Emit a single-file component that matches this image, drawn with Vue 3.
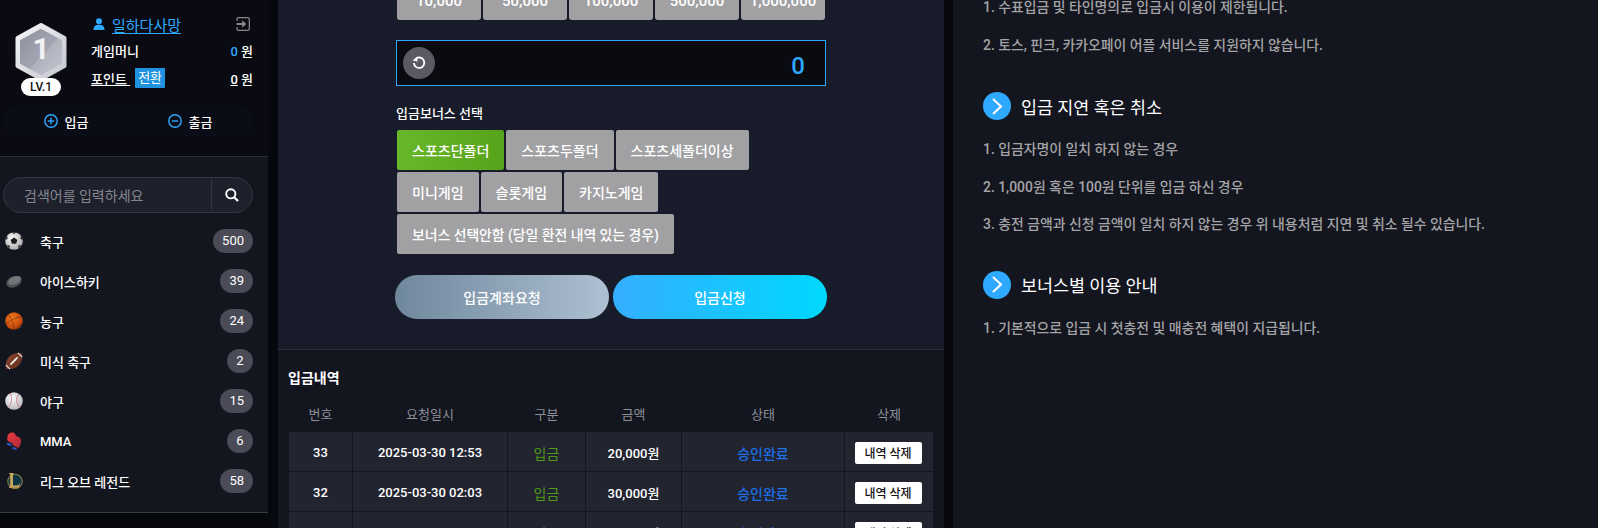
<template>
  <div class="page">
    <aside class="side">
      <section class="profile">
        <div class="profile__top">
          <div class="level">
            <svg class="level__hex" viewBox="0 0 54 58" width="54" height="58">
              <defs>
                <linearGradient id="hexOuter" x1="0" y1="0" x2="1" y2="1">
                  <stop offset="0" stop-color="#f6f6f8" />
                  <stop offset="1" stop-color="#c4c6ce" />
                </linearGradient>
                <linearGradient id="hexInner" x1="0" y1="0" x2="1" y2="1">
                  <stop offset="0" stop-color="#8f919f" />
                  <stop offset="0.55" stop-color="#a3a5b2" />
                  <stop offset="0.56" stop-color="#b0b2be" />
                  <stop offset="1" stop-color="#c3c4cf" />
                </linearGradient>
              </defs>
              <path d="M27 2 L50.5 15 V43 L27 56 L3.5 43 V15 Z" fill="url(#hexOuter)" stroke="url(#hexOuter)" stroke-width="4" stroke-linejoin="round" />
              <path d="M27 7 L47 18 V40 L27 51 L7 40 V18 Z" fill="url(#hexInner)" stroke="url(#hexInner)" stroke-width="2" stroke-linejoin="round" />
            </svg>
            <span class="level__num">1</span>
            <span class="level__pill">LV.1</span>
          </div>
          <div class="info">
            <div class="info__name">
              <svg viewBox="0 0 12 12" width="12" height="12">
                <circle cx="6" cy="3.2" r="3" fill="#2fa8ff" />
                <path d="M0.5 12 C0.5 8 3 6.8 6 6.8 C9 6.8 11.5 8 11.5 12 Z" fill="#2fa8ff" />
              </svg>
              <a class="info__link">일하다사망</a>
              <svg class="info__logout" viewBox="0 0 14 14" width="14" height="14" fill="none">
                <path d="M1 4 V2 Q1 0.7 2.3 0.7 H11.7 Q13.3 0.7 13.3 2.3 V11.7 Q13.3 13.3 11.7 13.3 H2.3 Q1 13.3 1 12 V10" stroke="#8a8a8a" stroke-width="1.2" />
                <path d="M0.5 7 H8.5" stroke="#8a8a8a" stroke-width="2" />
                <path d="M6.2 3.2 L10.4 7 L6.2 10.8 Z" fill="#8a8a8a" />
              </svg>
            </div>
            <div class="info__row">
              <span class="info__label">게임머니</span>
              <span class="info__value"><b>0</b> 원</span>
            </div>
            <div class="info__row">
              <span class="info__label info__label--point"><u>포인트&nbsp;</u><em>전환</em></span>
              <span class="info__value"><u>0</u> 원</span>
            </div>
          </div>
        </div>
        <div class="actions">
          <span class="actions__item">
            <svg viewBox="0 0 14 14" width="14" height="14" fill="none" stroke="#2fa8ff" stroke-width="1.4">
              <circle cx="7" cy="7" r="6.2" /><path d="M3.8 7 H10.2 M7 3.8 V10.2" />
            </svg>
            입금
          </span>
          <span class="actions__item">
            <svg viewBox="0 0 14 14" width="14" height="14" fill="none" stroke="#2fa8ff" stroke-width="1.4">
              <circle cx="7" cy="7" r="6.2" /><path d="M3.8 7 H10.2" />
            </svg>
            출금
          </span>
        </div>
      </section>

      <section class="nav">
        <div class="search">
          <span class="search__text">검색어를 입력하세요</span>
          <span class="search__btn">
            <svg viewBox="0 0 14 14" width="14" height="14" fill="none" stroke="#fff">
              <circle cx="5.8" cy="5.8" r="4.6" stroke-width="1.9" /><path d="M9.2 9.2 L13 13" stroke-width="2.2" />
            </svg>
          </span>
        </div>
        <ul class="sports">
          <li v-for="s in sports" :key="s.name" class="sports__row">
            <svg class="sports__icon" viewBox="0 0 18 18" width="18" height="18">
              <defs>
                <radialGradient id="soccerFill" cx="0.4" cy="0.35" r="0.7">
                  <stop offset="0" stop-color="#fafafa" /><stop offset="1" stop-color="#a8a8a8" />
                </radialGradient>
                <radialGradient id="basketFill" cx="0.4" cy="0.35" r="0.75">
                  <stop offset="0" stop-color="#f07a1c" /><stop offset="0.7" stop-color="#c84a0c" /><stop offset="1" stop-color="#6e3208" />
                </radialGradient>
                <linearGradient id="footballFill" x1="0" y1="0" x2="1" y2="1">
                  <stop offset="0" stop-color="#8e4a30" /><stop offset="1" stop-color="#5f2c1c" />
                </linearGradient>
                <radialGradient id="baseballFill" cx="0.4" cy="0.35" r="0.75">
                  <stop offset="0" stop-color="#fdfdfd" /><stop offset="1" stop-color="#b0b0b6" />
                </radialGradient>
                <linearGradient id="gloveFill" x1="0" y1="0" x2="1" y2="1">
                  <stop offset="0" stop-color="#ec3a40" /><stop offset="1" stop-color="#a92a36" />
                </linearGradient>
              </defs>
              <template v-if="s.icon === 'soccer'">
                <circle cx="9" cy="9" r="8.8" fill="url(#soccerFill)" />
                <path d="M9 5.6 L12.4 8 L11.1 11.8 H6.9 L5.6 8 Z" fill="#1c1c1c" />
                <path d="M6.6 0.6 L9 2 L11.4 0.6 Q9 -0.2 6.6 0.6 Z M0.3 8.6 L2.6 6.6 L2 3.2 Q0.2 5.6 0.3 8.6 Z M17.7 8.6 L15.4 6.6 L16 3.2 Q17.8 5.6 17.7 8.6 Z M4.2 16.4 L5 13.8 L2 13 Q2.8 15.2 4.2 16.4 Z M13.8 16.4 L13 13.8 L16 13 Q15.2 15.2 13.8 16.4 Z" fill="#262626" />
              </template>
              <template v-else-if="s.icon === 'puck'">
                <ellipse cx="9" cy="9.8" rx="8" ry="5.4" fill="#4f5254" transform="rotate(-24 9 9.8)" />
                <ellipse cx="9.6" cy="8.4" rx="6.8" ry="3.8" fill="#737678" transform="rotate(-24 9.6 8.4)" />
              </template>
              <template v-else-if="s.icon === 'basket'">
                <circle cx="9" cy="9" r="8.8" fill="url(#basketFill)" />
                <path d="M1.4 12 Q9 5 16.4 5 M3.4 2.4 Q9 9 9.4 17.6 M11.6 17.2 Q14.6 12.6 17.4 11.4" stroke="#6a2a08" stroke-width="0.6" fill="none" />
              </template>
              <template v-else-if="s.icon === 'football'">
                <path d="M1.2 16.8 Q-0.6 9.6 4.4 4.6 Q9.4 -0.2 16.8 1.2 Q18.6 8.4 13.6 13.4 Q8.6 18.2 1.2 16.8 Z" fill="url(#footballFill)" />
                <path d="M0.9 13 L5 17.1 M13 0.9 L17.1 5" stroke="#e9dfd8" stroke-width="1.1" />
                <path d="M5.4 12.6 L12.6 5.4" stroke="#f2ece6" stroke-width="1.6" />
                <path d="M7.2 9.2 L8.8 10.8 M9.2 7.2 L10.8 8.8" stroke="#f2ece6" stroke-width="0.8" />
              </template>
              <template v-else-if="s.icon === 'baseball'">
                <circle cx="9" cy="9" r="8.8" fill="url(#baseballFill)" />
                <path d="M5.2 1.2 Q8.8 9 3.2 15.6 M13.4 2 Q9.4 9 14.8 15.6" stroke="#b8404a" stroke-width="0.9" stroke-dasharray="1.2 0.7" fill="none" />
              </template>
              <template v-else-if="s.icon === 'mma'">
                <path d="M2.6 3.6 Q4 0 8 0.6 Q10.4 1 10.8 3.4 L15.2 6 Q17 9 15.4 12.4 L14 16 L8.6 14 L7.2 11 Q3 10.6 2.2 7.6 Z" fill="url(#gloveFill)" />
                <path d="M2.4 10.6 L6.8 12 L6.2 14.2 L1.8 12.8 Z M7.6 14.8 L12 16.4 L11.2 18 L6.8 16.8 Z" fill="#2a55c4" />
              </template>
              <template v-else>
                <circle cx="10" cy="9.4" r="7.2" fill="#0d3444" stroke="#8d7a45" stroke-width="1.1" />
                <path d="M3.4 1 H9 L8 2.2 V13.4 H12.6 L15 11 L13.6 15.8 H3.6 L5.2 13.6 V2.4 Z" fill="#c9a65a" />
              </template>
            </svg>
            <span class="sports__name">{{ s.name }}</span>
            <span class="sports__count">{{ s.count }}</span>
          </li>
        </ul>
      </section>
    </aside>

    <main class="main">
      <section class="form">
        <div class="form__inner">
          <div class="amounts">
            <button v-for="a in amounts" :key="a" type="button" class="amounts__btn">{{ a }}</button>
          </div>
          <div class="field">
            <span class="field__reset">
              <svg viewBox="0 0 14 14" width="14" height="14" fill="none">
                <path d="M4.2 2.4 A5.2 5.2 0 1 1 1.9 7" stroke="#fff" stroke-width="1.8" />
                <path d="M0.6 4.4 L5 0.8 L5.6 5.4 Z" fill="#fff" />
              </svg>
            </span>
            <span class="field__value">0</span>
          </div>
          <div class="form__label">입금보너스 선택</div>
          <div class="bonus">
            <button
              v-for="(b, i) in bonuses"
              :key="b"
              type="button"
              class="bonus__btn"
              :class="{ 'bonus__btn--on': i === 0 }"
            >
              {{ b }}
            </button>
          </div>
          <div class="submit">
            <button type="button" class="submit__btn submit__btn--grey">입금계좌요청</button>
            <button type="button" class="submit__btn submit__btn--blue">입금신청</button>
          </div>
        </div>
      </section>

      <section class="history">
        <h3 class="history__title">입금내역</h3>
        <table class="table">
          <colgroup>
            <col style="width: 64px" />
            <col style="width: 155px" />
            <col style="width: 78px" />
            <col style="width: 96px" />
            <col style="width: 163px" />
            <col style="width: 89px" />
          </colgroup>
          <thead>
            <tr>
              <th v-for="h in headers" :key="h">{{ h }}</th>
            </tr>
          </thead>
          <tbody>
            <tr v-for="r in rows" :key="r.no">
              <td>{{ r.no }}</td>
              <td>{{ r.date }}</td>
              <td class="table__type">입금</td>
              <td>{{ r.amount }}</td>
              <td class="table__state">승인완료</td>
              <td><button type="button" class="table__del">내역 삭제</button></td>
            </tr>
          </tbody>
        </table>
      </section>
    </main>

    <section class="notes">
      <div class="notes__block notes__block--first">
        <p>1. 수표입금 및 타인명의로 입금시 이용이 제한됩니다.</p>
        <p>2. 토스, 핀크, 카카오페이 어플 서비스를 지원하지 않습니다.</p>
      </div>
      <div v-for="n in notes" :key="n.title" class="notes__block">
        <h4 class="notes__head">
          <span class="notes__dot">
            <svg viewBox="0 0 10 17" width="10" height="17" fill="none">
              <path d="M1 1 L9 8.5 L1 16" stroke="#fff" stroke-width="2" />
            </svg>
          </span>
          {{ n.title }}
        </h4>
        <p v-for="l in n.lines" :key="l">{{ l }}</p>
      </div>
    </section>
  </div>
</template>

<script setup>
const sports = [
  { name: "축구", count: 500, icon: "soccer" },
  { name: "아이스하키", count: 39, icon: "puck" },
  { name: "농구", count: 24, icon: "basket" },
  { name: "미식 축구", count: 2, icon: "football" },
  { name: "야구", count: 15, icon: "baseball" },
  { name: "MMA", count: 6, icon: "mma" },
  { name: "리그 오브 레전드", count: 58, icon: "lol" }
];

const amounts = ["10,000", "50,000", "100,000", "500,000", "1,000,000"];

const bonuses = [
  "스포츠단폴더",
  "스포츠두폴더",
  "스포츠세폴더이상",
  "미니게임",
  "슬롯게임",
  "카지노게임",
  "보너스 선택안함 (당일 환전 내역 있는 경우)"
];

const headers = ["번호", "요청일시", "구분", "금액", "상태", "삭제"];

const rows = [
  { no: 33, date: "2025-03-30 12:53", amount: "20,000원" },
  { no: 32, date: "2025-03-30 02:03", amount: "30,000원" },
  { no: 31, date: "2025-03-29 18:21", amount: "10,000원" }
];

const notes = [
  {
    title: "입금 지연 혹은 취소",
    lines: [
      "1. 입금자명이 일치 하지 않는 경우",
      "2. 1,000원 혹은 100원 단위를 입금 하신 경우",
      "3. 충전 금액과 신청 금액이 일치 하지 않는 경우 위 내용처럼 지연 및 취소 될수 있습니다."
    ]
  },
  {
    title: "보너스별 이용 안내",
    lines: ["1. 기본적으로 입금 시 첫충전 및 매충전 혜택이 지급됩니다."]
  }
];
</script>

<style>
html,
body {
  margin: 0;
  background: #07080d;
  overflow: hidden;
}
</style>

<style scoped>
.page {
  display: flex;
  height: 528px;
  overflow: hidden;
  background: #07080d;
  color: #fff;
  font-family: Roboto, "Noto Sans CJK KR", sans-serif;
  font-size: 13px;
}

.side {
  flex: 0 0 268px;
  display: flex;
  flex-direction: column;
}

.profile {
  height: 157px;
  box-sizing: border-box;
  padding: 0 16px 0 4px;
  background: #0a0b12;
  border-bottom: 1px solid #2a2c36;
}

.profile__top {
  display: flex;
  height: 106px;
}

.level {
  position: relative;
  flex: 0 0 87px;
  padding: 23px 0 0 10px;
  box-sizing: border-box;
}

.level__hex {
  display: block;
}

.level__num {
  position: absolute;
  left: 10px;
  top: 30px;
  width: 54px;
  text-align: center;
  color: #f2f2f4;
  font-size: 30px;
  font-weight: 700;
  line-height: 38px;
}

.level__pill {
  position: absolute;
  left: 17px;
  top: 78px;
  width: 40px;
  height: 18px;
  border-radius: 9px;
  background: #fff;
  color: #111;
  font-size: 12px;
  font-weight: 500;
  line-height: 18px;
  text-align: center;
}

.info {
  flex: 1;
  padding-top: 14px;
}

.info__name {
  display: flex;
  align-items: center;
  height: 20px;
  margin: 0 0 2px 2px;
  gap: 7px;
}

.info__link {
  color: #2fa8ff;
  font-size: 15px;
  text-decoration: underline;
  text-underline-offset: 2px;
}

.info__logout {
  margin-left: auto;
  margin-right: 2px;
}

.info__row {
  display: flex;
  justify-content: space-between;
  align-items: center;
  height: 28px;
  font-weight: 500;
}

.info__label--point {
  display: flex;
  align-items: center;
  gap: 5px;
}

.info__label--point em {
  display: inline-block;
  width: 30px;
  height: 20px;
  background: #1f93e0;
  border-radius: 1px;
  font-style: normal;
  font-weight: 400;
  line-height: 20px;
  text-align: center;
}

.info__value {
  margin-right: -1px;
}

.info__value b {
  color: #2fa8ff;
  font-weight: 500;
}

.actions {
  display: flex;
  height: 30px;
  border-radius: 15px;
  background: #0b0d16;
}

.actions__item {
  flex: 1;
  display: flex;
  align-items: center;
  justify-content: center;
  gap: 7px;
  font-weight: 500;
}

.nav {
  height: 356px;
  box-sizing: border-box;
  padding: 20px 15px 0 3px;
  background: #13151f;
  border-bottom: 1px solid #3a3c44;
}

.search {
  display: flex;
  align-items: center;
  height: 36px;
  border: 1px solid #33353f;
  border-radius: 18px;
  background: #1e202c;
  box-sizing: border-box;
}

.search__text {
  flex: 1;
  padding-left: 20px;
  color: #85868e;
  font-size: 14px;
}

.search__btn {
  display: flex;
  align-items: center;
  justify-content: center;
  width: 40px;
  height: 32px;
  border-left: 1px solid #33353f;
}

.sports {
  margin: 0;
  padding: 8px 0 0;
  list-style: none;
}

.sports__row {
  display: flex;
  align-items: center;
  height: 40px;
}

.sports__icon {
  flex: 0 0 18px;
  margin-left: 2px;
  margin-right: 17px;
}

.sports__name {
  flex: 1;
  font-weight: 500;
  font-size: 13px;
}

.sports__count {
  min-width: 8px;
  height: 24px;
  padding: 0 9px;
  border-radius: 12px;
  background: #4a4b56;
  font-size: 13px;
  line-height: 24px;
  text-align: center;
}

.main {
  flex: 0 0 666px;
  margin-left: 10px;
  display: flex;
  flex-direction: column;
}

.form {
  height: 350px;
  flex: none;
  box-sizing: border-box;
  background: #181b29;
  border-bottom: 1px solid #2c2f3e;
}

.form__inner {
  width: 432px;
  margin-left: 117px;
}

.amounts {
  display: flex;
  gap: 2px;
  margin-top: -19px;
  padding-left: 2px;
}

.amounts__btn {
  width: 84px;
  height: 39px;
  border: none;
  border-radius: 3px;
  background: #a1a1a3;
  color: #fff;
  font: inherit;
  font-size: 15px;
  font-weight: 500;
  padding: 0;
}

.field {
  display: flex;
  align-items: center;
  justify-content: space-between;
  width: 430px;
  height: 46px;
  margin: 20px 0 0 1px;
  padding: 0 20px 0 6px;
  box-sizing: border-box;
  border: 1px solid #2fa8ff;
  background: #0a0b10;
}

.field__reset {
  display: flex;
  align-items: center;
  justify-content: center;
  width: 32px;
  height: 32px;
  border-radius: 50%;
  background: #5a5a65;
}

.field__value {
  color: #2fa8ff;
  font-size: 24px;
  font-weight: 500;
  padding-top: 5px;
}

.form__label {
  margin: 18px 0 0 1px;
  height: 20px;
  line-height: 20px;
  font-weight: 500;
  font-size: 13px;
}

.bonus {
  display: flex;
  flex-wrap: wrap;
  gap: 2px;
  margin-top: 6px;
  padding-left: 2px;
  width: 360px;
}

.bonus__btn {
  height: 40px;
  padding: 0 15px;
  border: none;
  border-radius: 2px;
  background: #a1a1a3;
  color: #fff;
  font: inherit;
  font-size: 14px;
  font-weight: 500;
  white-space: nowrap;
}

.bonus__btn:last-child {
  font-size: 13.85px;
}

.bonus__btn--on {
  background: linear-gradient(90deg, #68b82a, #57a31a);
}

.submit {
  display: flex;
  gap: 4px;
  margin-top: 21px;
}

.submit__btn {
  width: 214px;
  height: 44px;
  border: none;
  border-radius: 22px;
  color: #fff;
  font: inherit;
  font-size: 14px;
  font-weight: 500;
}

.submit__btn--grey {
  background: linear-gradient(90deg, #6f879c, #aec0d2);
}

.submit__btn--blue {
  background: linear-gradient(90deg, #35aeff, #00d8ff);
}

.history {
  flex: 1;
  padding: 0 10px;
  background: #13151f;
}

.history__title {
  margin: 0;
  padding-top: 18px;
  height: 20px;
  line-height: 20px;
  font-size: 14px;
  font-weight: 700;
}

.table {
  width: 645px;
  margin-top: 8px;
  table-layout: fixed;
  border-collapse: collapse;
}

.table th {
  height: 35px;
  color: #8d8f99;
  font-size: 13px;
  font-weight: 400;
  padding: 0;
}

.table td {
  height: 37px;
  padding: 2px 0 0;
  background: #22242f;
  border: 1px solid #13151f;
  font-weight: 500;
  font-size: 13px;
  text-align: center;
}

.table__type {
  color: #4f9a1a;
}

td.table__type {
  font-weight: 400;
  font-size: 14px;
}

td.table__state {
  color: #1e6fe8;
  font-size: 14px;
}

.table__del {
  width: 67px;
  height: 22px;
  margin-right: 2px;
  border: none;
  border-radius: 2px;
  background: #fff;
  color: #111;
  font: inherit;
  font-size: 12px;
  font-weight: 500;
  padding: 0;
}

.notes {
  flex: 1;
  margin-left: 9px;
  padding: 0 0 0 30px;
  background: #13151f;
  color: #a4a4a6;
  font-size: 13.9px;
  font-weight: 500;
}

.notes__block p {
  margin: 0;
  height: 37.5px;
  line-height: 37.5px;
}

.notes__block--first {
  margin-top: -11px;
}

.notes__head {
  display: flex;
  align-items: center;
  gap: 10px;
  height: 28px;
  margin: 27px 0 11px;
  color: #fff;
  font-size: 17.4px;
  font-weight: 400;
}

.notes__block--first + .notes__block .notes__head {
  margin-top: 28px;
}

.notes__dot {
  display: flex;
  align-items: center;
  justify-content: center;
  width: 28px;
  height: 28px;
  border-radius: 50%;
  background: #2fa8ff;
}
</style>
